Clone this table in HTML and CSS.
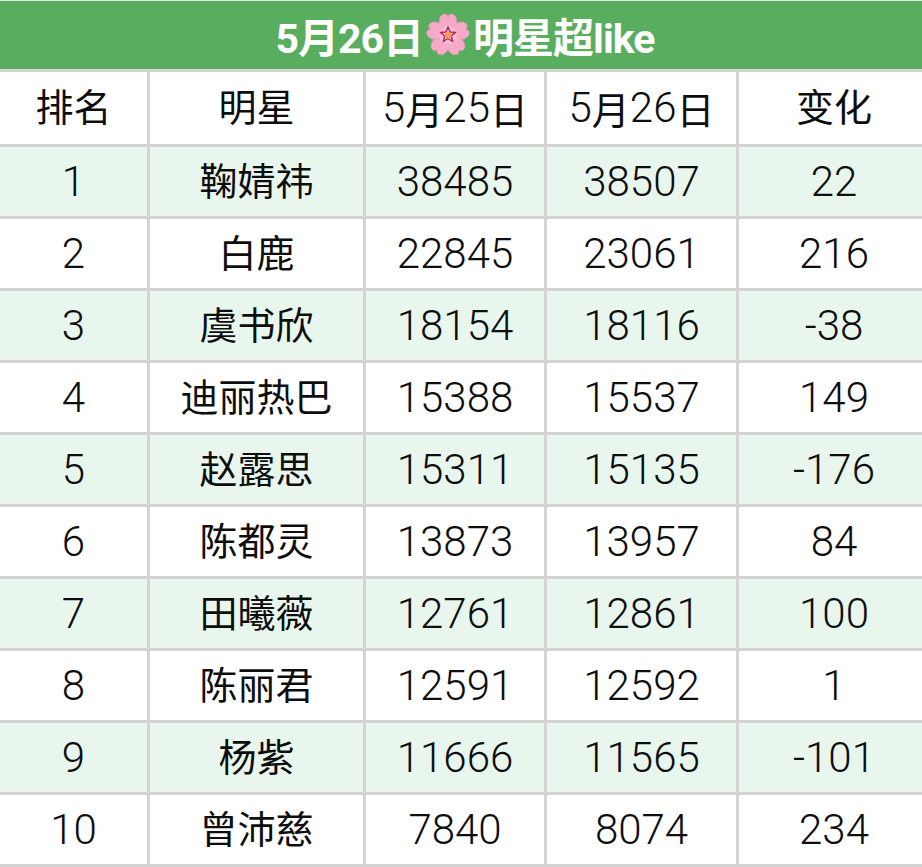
FILE: index.html
```html
<!DOCTYPE html>
<html lang="zh">
<head>
<meta charset="utf-8">
<title>5月26日明星超like</title>
<link rel="stylesheet" href="styles.css">
</head>
<body>
<div class="page">
  <div class="title">
    <span>5月26日</span>
    <svg class="blossom" viewBox="0 0 44 44" aria-hidden="true">
      <g transform="translate(22 22)">
        <g id="petal">
          <path d="M0 -2 C -9 -6 -11 -16 -6 -20 C -3 -22 -1 -21 0 -18 C 1 -21 3 -22 6 -20 C 11 -16 9 -6 0 -2 Z" fill="#f6aac8" stroke="#f39bbd" stroke-width="0.6"/>
        </g>
        <use href="#petal" transform="rotate(72)"/>
        <use href="#petal" transform="rotate(144)"/>
        <use href="#petal" transform="rotate(216)"/>
        <use href="#petal" transform="rotate(288)"/>
        <circle r="9" fill="#f9bdd5"/>
        <polygon points="0,-8 2,-3 7.6,-2.5 3.2,1 4.7,6.5 0,3.5 -4.7,6.5 -3.2,1 -7.6,-2.5 -2,-3" fill="none" stroke="#b0225f" stroke-width="1.4" stroke-linejoin="round"/>
        <circle r="3.4" fill="#f29a58"/>
      </g>
    </svg>
    <span>明星超like</span>
  </div>
  <div class="table">
    <div class="cell head name"><span class="cjk">排名</span></div>
    <div class="cell head name"><span class="cjk">明星</span></div>
    <div class="cell head">5<span class="cjk">月</span>25<span class="cjk">日</span></div>
    <div class="cell head">5<span class="cjk">月</span>26<span class="cjk">日</span></div>
    <div class="cell head name last"><span class="cjk">变化</span></div>

    <div class="cell alt">1</div><div class="cell alt name"><span class="cjk">鞠婧祎</span></div><div class="cell alt">38485</div><div class="cell alt">38507</div><div class="cell alt last">22</div>
    <div class="cell">2</div><div class="cell name"><span class="cjk">白鹿</span></div><div class="cell">22845</div><div class="cell">23061</div><div class="cell last">216</div>
    <div class="cell alt">3</div><div class="cell alt name"><span class="cjk">虞书欣</span></div><div class="cell alt">18154</div><div class="cell alt">18116</div><div class="cell alt last">-38</div>
    <div class="cell">4</div><div class="cell name"><span class="cjk">迪丽热巴</span></div><div class="cell">15388</div><div class="cell">15537</div><div class="cell last">149</div>
    <div class="cell alt">5</div><div class="cell alt name"><span class="cjk">赵露思</span></div><div class="cell alt">15311</div><div class="cell alt">15135</div><div class="cell alt last">-176</div>
    <div class="cell">6</div><div class="cell name"><span class="cjk">陈都灵</span></div><div class="cell">13873</div><div class="cell">13957</div><div class="cell last">84</div>
    <div class="cell alt">7</div><div class="cell alt name"><span class="cjk">田曦薇</span></div><div class="cell alt">12761</div><div class="cell alt">12861</div><div class="cell alt last">100</div>
    <div class="cell">8</div><div class="cell name"><span class="cjk">陈丽君</span></div><div class="cell">12591</div><div class="cell">12592</div><div class="cell last">1</div>
    <div class="cell alt">9</div><div class="cell alt name"><span class="cjk">杨紫</span></div><div class="cell alt">11666</div><div class="cell alt">11565</div><div class="cell alt last">-101</div>
    <div class="cell">10</div><div class="cell name"><span class="cjk">曾沛慈</span></div><div class="cell">7840</div><div class="cell">8074</div><div class="cell last">234</div>
  </div>
</div>
</body>
</html>
```

FILE: styles.css
```css
html, body {
  margin: 0;
  padding: 0;
  background: #ffffff;
}

.page {
  width: 922px;
  height: 867px;
  overflow: hidden;
}

.title {
  height: 68px;
  border-top: 1px solid #dfe8df;
  background: #58ad5e;
  color: #ffffff;
  display: flex;
  align-items: center;
  justify-content: center;
  gap: 3px;
  font-family: Roboto, "Noto Sans CJK SC", sans-serif;
  font-weight: 700;
  font-size: 41px;
  letter-spacing: -1px;
  padding-left: 8px;
}

.blossom {
  width: 44px;
  height: 44px;
  display: block;
}

.table {
  display: grid;
  grid-template-columns: 147px 213px 178px 189px 183px;
  grid-template-rows: 72px repeat(10, 69px);
  column-gap: 3px;
  row-gap: 3px;
  background: #d3d3d3;
  padding: 3px 0 4px 0;
}

.cell {
  background: #ffffff;
  display: flex;
  align-items: center;
  justify-content: center;
  font-family: Roboto, "Noto Sans CJK SC", sans-serif;
  font-weight: 300;
  font-size: 42px;
  color: #0e0e0e;
  line-height: 1;
}

.cell.alt {
  background: #e8f6ee;
}

.cell.last {
  padding-left: 7px;
}

.cjk {
  font-family: "Noto Sans CJK SC", sans-serif;
  font-weight: 400;
  font-size: 38px;
}

.name .cjk {
  padding-bottom: 6px;
}
```
